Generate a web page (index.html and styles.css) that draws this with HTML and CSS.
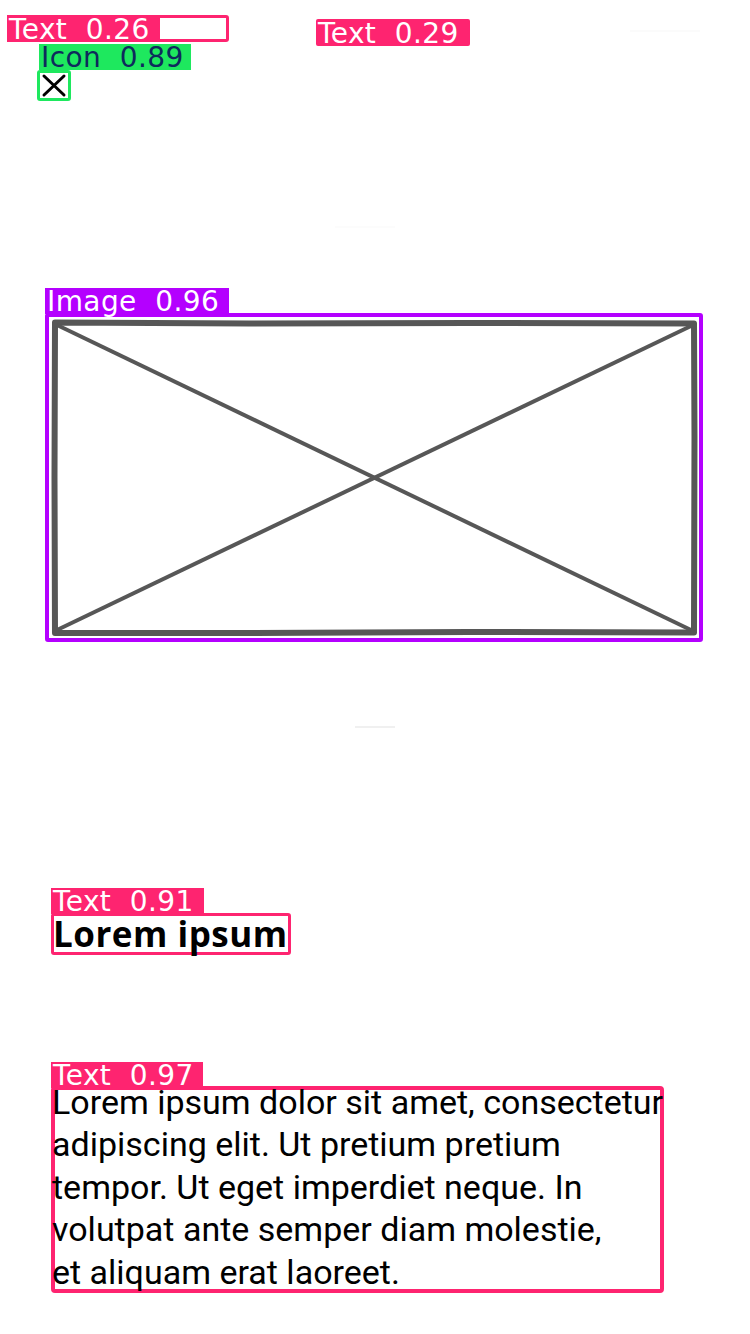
FILE: index.html
```html
<!DOCTYPE html>
<html>
<head>
<meta charset="utf-8">
<link rel="stylesheet" href="styles.css">
</head>
<body>
<div class="page">
  <div class="top">
    <div class="det det-text26"><span class="tag tag-pink">Text  0.26</span></div>
    <span class="tag tag-green tag-icon">Icon  0.89</span>
    <div class="det det-icon">
      <svg width="28" height="25" viewBox="0 0 28 25"><path d="M4 3 L24 22 M24 3 L4 22" stroke="#000" stroke-width="3" stroke-linecap="round" fill="none"/></svg>
    </div>
    <span class="tag tag-pink tag-text29">Text  0.29</span>
    <div class="faint faint-a"></div>
    <div class="faint faint-b"></div>
  </div>

  <div class="figure">
    <span class="tag tag-purple tag-above">Image  0.96</span>
    <svg class="wire" width="650" height="321" viewBox="0 0 650 321">
      <path d="M6 5.5 L200 6.5 L420 6 L645 6.5 L645.5 120 L645 315.5 L420 315 L200 316 L6 316 L5.5 160 Z" fill="none" stroke="#575757" stroke-width="6" stroke-linejoin="round"/>
      <path d="M8 8 L642 313" stroke="#575757" stroke-width="4" fill="none"/>
      <path d="M8 313 L642 9" stroke="#575757" stroke-width="4" fill="none"/>
    </svg>
  </div>

  <div class="faint faint-c"></div>

  <div class="heading">
    <span class="tag tag-pink tag-above">Text  0.91</span>
    <h1 class="title">Lorem ipsum</h1>
  </div>

  <div class="para">
    <span class="tag tag-pink tag-above tag-para">Text  0.97</span>
    <p class="body">Lorem ipsum dolor sit amet, consectetur<br>adipiscing elit. Ut pretium pretium<br>tempor. Ut eget imperdiet neque. In<br>volutpat ante semper diam molestie,<br>et aliquam erat laoreet.</p>
  </div>
</div>
</body>
</html>
```

FILE: styles.css
```css
html, body {
  margin: 0;
  padding: 0;
  background: #fff;
}
.page {
  width: 750px;
  height: 1334px;
  position: relative;
  overflow: hidden;
  font-family: Roboto, "Noto Sans", sans-serif;
}
.top {
  position: relative;
  height: 313px;
}
.tag {
  display: flex;
  align-items: center;
  box-sizing: border-box;
  height: 26px;
  padding: 2px 0 0 2px;
  font-family: "DejaVu Sans", sans-serif;
  font-size: 28px;
  letter-spacing: 0.4px;
  line-height: 26px;
  color: #fff;
  white-space: pre;
}
.tag-pink { background: #fe2470; }
.tag-green { background: #1ee85e; color: #0e2a5c; }
.tag-purple { background: #b400ff; }

.det {
  position: absolute;
  box-sizing: border-box;
  border-radius: 3px;
}
.det-text26 {
  left: 7px;
  top: 15px;
  width: 222px;
  height: 27px;
  border: 3px solid #fe2470;
  background: #fff;
}
.det-text26 .tag {
  position: absolute;
  left: -3px;
  top: -3px;
  width: 153px;
  height: 27px;
}
.tag-icon {
  position: absolute;
  left: 39px;
  top: 44px;
  width: 152px;
}
.det-icon {
  left: 37px;
  top: 70px;
  width: 34px;
  height: 31px;
  border: 3px solid #1ee85e;
  display: flex;
  align-items: center;
  justify-content: center;
}
.tag-text29 {
  position: absolute;
  left: 316px;
  top: 19px;
  width: 154px;
  height: 27px;
  border-radius: 2px;
}
.faint {
  position: absolute;
  height: 2px;
  background: #f7f7f7;
}
.faint-a { left: 630px; top: 30px; width: 70px; background: #fbfbfb; }
.faint-b { left: 335px; top: 226px; width: 60px; background: #fcfcfc; }
.faint-c { left: 355px; top: 726px; width: 40px; background: #f0f0f0; }

.tag-above {
  position: absolute;
  left: 0;
  top: -25px;
}
.figure {
  position: relative;
  margin-left: 45px;
  width: 658px;
  height: 329px;
  box-sizing: border-box;
  border: 4px solid #b400ff;
  border-radius: 3px;
}
.figure .tag-above {
  left: -4px;
  top: -29px;
  width: 184px;
}
.wire { display: block; }

.heading {
  position: relative;
  margin: 271px 0 0 51px;
  width: 240px;
  height: 42px;
  box-sizing: border-box;
  border: 3px solid #fe2470;
  border-radius: 3px;
}
.heading .tag-above {
  left: -3px;
  top: -28px;
  width: 153px;
}
.title {
  margin: 0 0 0 -1px;
  font-family: "Open Sans", sans-serif;
  font-weight: 700;
  font-size: 35px;
  letter-spacing: 0.5px;
  line-height: 36px;
  color: #000;
  white-space: nowrap;
  position: relative;
}
.para {
  position: relative;
  margin: 131px 0 0 51px;
  width: 613px;
  height: 207px;
  box-sizing: border-box;
  border: 4px solid #fe2470;
  border-radius: 4px;
}
.para .tag-above {
  left: -4px;
  top: -28px;
  width: 152px;
}
.body {
  margin: -9px 0 0 -3px;
  width: 640px;
  font-family: Roboto, sans-serif;
  font-size: 34px;
  line-height: 42.4px;
  color: #000;
  white-space: nowrap;
  position: relative;
}
```
